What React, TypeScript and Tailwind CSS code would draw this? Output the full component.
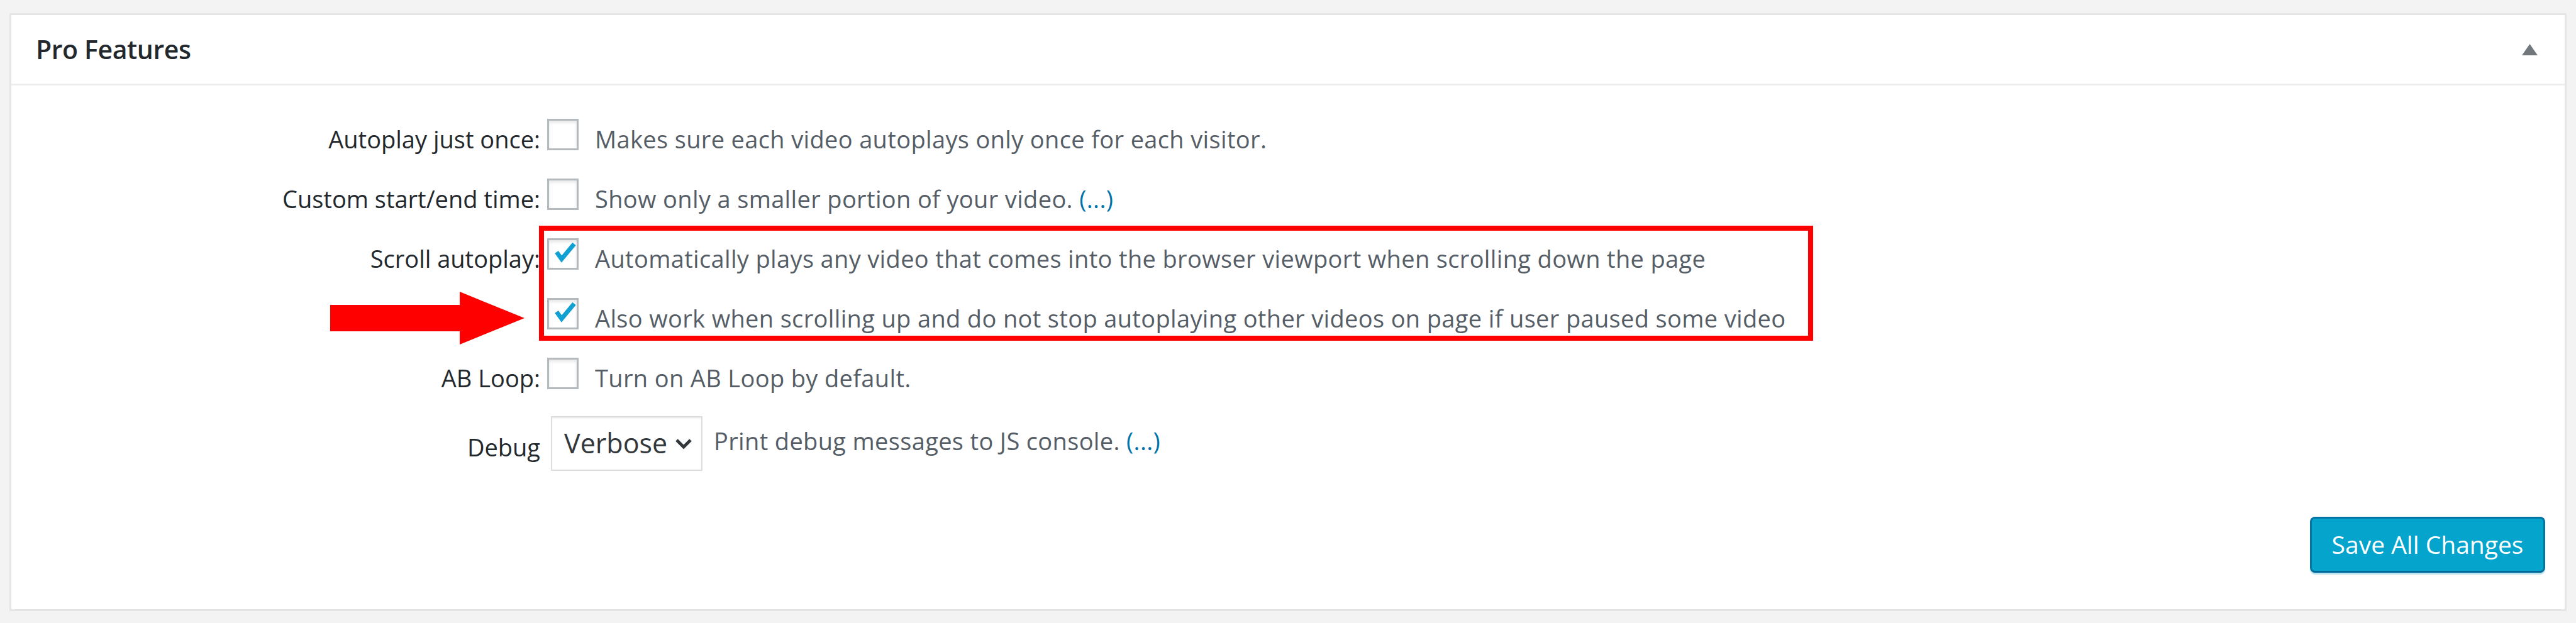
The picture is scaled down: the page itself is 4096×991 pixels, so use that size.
import type { ReactNode } from "react";

const font = { fontFamily: '"Open Sans", "Noto Sans", sans-serif' };

function Checkbox({ checked = false }: { checked?: boolean }) {
  return (
    <span className="relative inline-block h-[50px] w-[50px] shrink-0 border-[3px] border-[#b4b9be] bg-white shadow-[inset_0_3px_5px_rgba(0,0,0,0.1)]">
      {checked ? (
        <svg className="absolute left-[8px] top-[2px]" width="36" height="34" viewBox="0 0 36 34">
          <path d="M4 17 L12 28 L32 4" fill="none" stroke="#11a0d2" strokeWidth="7" strokeLinejoin="miter" />
        </svg>
      ) : null}
    </span>
  );
}

function Row({ label, checked, children }: { label: string; checked?: boolean; children: ReactNode }) {
  return (
    <div className="flex h-[50px] items-center">
      <div className="w-[841px] shrink-0 text-right text-[#23282d]">{label}</div>
      <div className="ml-[11px]">
        <Checkbox checked={checked} />
      </div>
      <div className="ml-[26px] whitespace-nowrap tracking-[0.35px] text-[#555d66]">{children}</div>
    </div>
  );
}

export default function App() {
  return (
    <div className="min-h-screen bg-[#f3f3f3] px-[15px] pt-[21px]" style={font}>
      <div className="flex h-[951px] flex-col border-[3px] border-[#e5e5e5] bg-white">
        <div className="flex h-[112px] shrink-0 items-center justify-between border-b-[3px] border-[#eeeeee] pl-[39px] pr-[43px]">
          <h2 className="text-[41px] font-semibold tracking-[-0.4px] text-[#23282d]">Pro Features</h2>
          <svg width="25" height="18" viewBox="0 0 25 18">
            <polygon points="12.5,0 25,18 0,18" fill="#72777c" />
          </svg>
        </div>

        <div className="relative flex flex-1 flex-col text-[38px]">
          <div className="flex flex-col gap-[45px] pt-[60px]">
            <Row label="Autoplay just once:">Makes sure each video autoplays only once for each visitor.</Row>
            <Row label="Custom start/end time:">
              Show only a smaller portion of your video. <span className="text-[#0073aa]">(...)</span>
            </Row>
            <Row label="Scroll autoplay:" checked>
              Automatically plays any video that comes into the browser viewport when scrolling down the page
            </Row>
            <Row label="" checked>
              Also work when scrolling up and do not stop autoplaying other videos on page if user paused some video
            </Row>
            <Row label="AB Loop:">Turn on AB Loop by default.</Row>
          </div>

          <div className="mt-[36px] flex h-[87px] items-center">
            <div className="mt-[12px] w-[841px] shrink-0 text-right text-[#23282d]">Debug</div>
            <div className="ml-[17px] flex h-[87px] w-[241px] items-center justify-between border-[2px] border-[#dddddd] bg-white pl-[19px] pr-[14px] shadow-[inset_0_2px_3px_rgba(0,0,0,0.05)]">
              <span className="text-[43px] text-[#32373c]">Verbose</span>
              <svg width="28" height="18" viewBox="0 0 28 18">
                <path d="M3 3 L14 14 L25 3" fill="none" stroke="#32373c" strokeWidth="5" />
              </svg>
            </div>
            <div className="mb-[8px] ml-[18px] whitespace-nowrap tracking-[0.35px] text-[#555d66]">
              Print debug messages to JS console. <span className="text-[#0073aa]">(...)</span>
            </div>
          </div>

          <div className="mt-auto flex justify-end pb-[58px] pr-[31px]">
            <button className="h-[89px] w-[374px] rounded-[8px] border-[3px] border-[#0074a2] border-b-[#006799] bg-[#04a4cc] text-[39px] text-white shadow-[0_3px_0_rgba(120,200,225,0.5)]">
              Save All Changes
            </button>
          </div>

          <div className="pointer-events-none absolute left-[839px] top-[223px] h-[183px] w-[2026px] border-[8px] border-[#ff0000]" />
          <svg className="pointer-events-none absolute left-[507px] top-[328px]" width="309" height="84" viewBox="0 0 309 84">
            <polygon points="0,21 206,21 206,0 309,42 206,84 206,63 0,63" fill="#ff0000" />
          </svg>
        </div>
      </div>
    </div>
  );
}
